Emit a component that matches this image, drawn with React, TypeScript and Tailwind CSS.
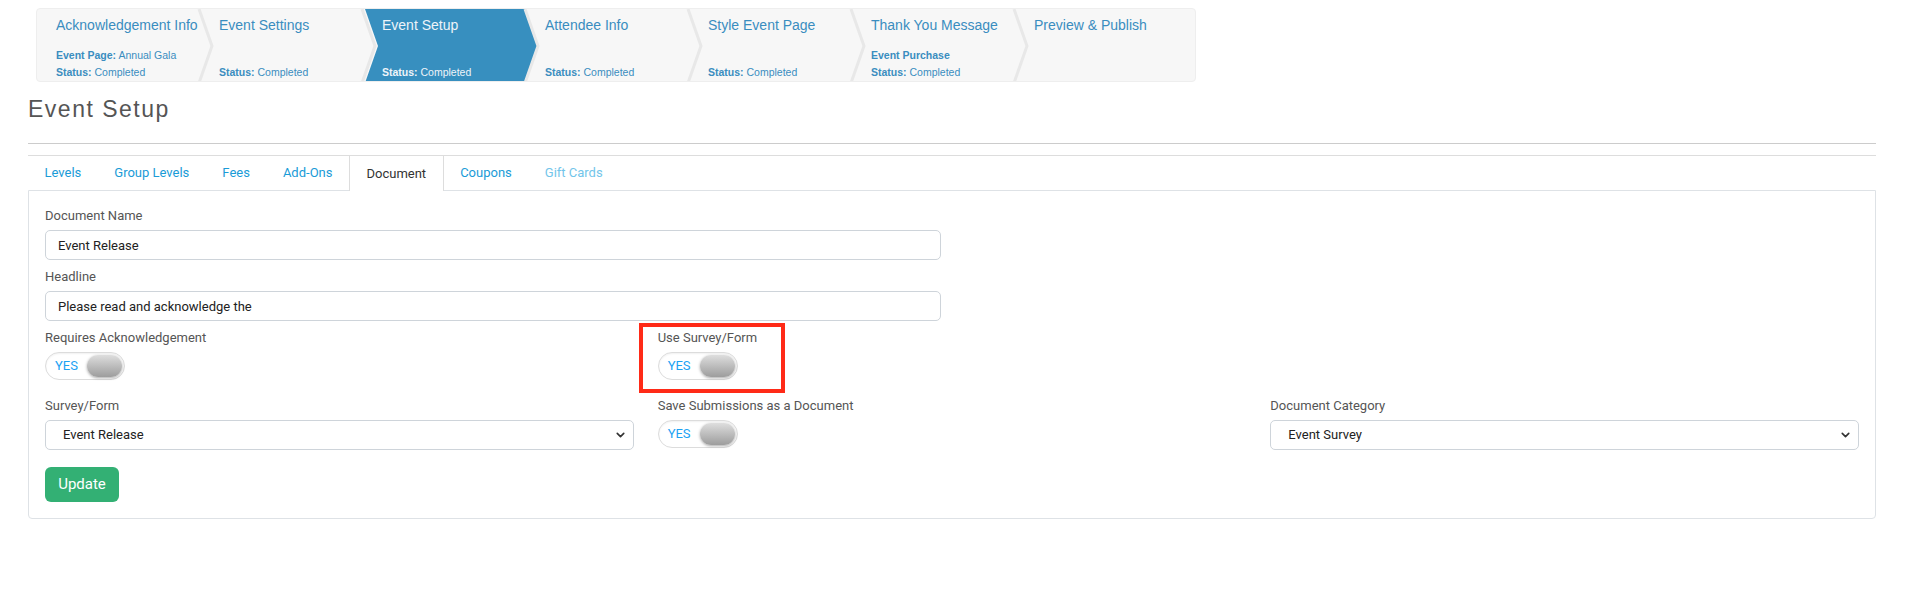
import { ChevronDown } from "lucide-react";

type Step = {
  title: string;
  lines: [string, string][];
  active?: boolean;
};

const steps: Step[] = [
  {
    title: "Acknowledgement Info",
    lines: [
      ["Event Page:", " Annual Gala"],
      ["Status:", " Completed"],
    ],
  },
  { title: "Event Settings", lines: [["Status:", " Completed"]] },
  { title: "Event Setup", lines: [["Status:", " Completed"]], active: true },
  { title: "Attendee Info", lines: [["Status:", " Completed"]] },
  { title: "Style Event Page", lines: [["Status:", " Completed"]] },
  {
    title: "Thank You Message",
    lines: [
      ["Event Purchase", ""],
      ["Status:", " Completed"],
    ],
  },
  { title: "Preview & Publish", lines: [] },
];

const tabs = ["Levels", "Group Levels", "Fees", "Add-Ons", "Document", "Coupons", "Gift Cards"];

function WizardStep({ step, last }: { step: Step; last: boolean }) {
  return (
    <div className={`relative h-full ${last ? "flex-1" : "w-[163px] shrink-0"}`}>
      {step.active && (
        <svg className="absolute left-[1px] top-0 overflow-visible" width="176" height="74" viewBox="0 0 176 74">
          <polygon points="0,0 160,0 173,37 160,74 0,74 13,37" fill="#378fbf" />
        </svg>
      )}
      {!last && (
        <svg className="absolute left-[161px] top-0 overflow-visible" width="16" height="74" viewBox="0 0 16 74">
          <polyline points="0,0 13,37 0,74" fill="none" stroke="#e8e8e8" strokeWidth="3" />
        </svg>
      )}
      <div
        className={`relative z-10 flex h-full flex-col pl-[18px] ${
          step.active ? "text-[#eef4f9]" : "text-[#3a8dbf]"
        }`}
      >
        <div className="pt-[8px] text-[14px] leading-4">{step.title}</div>
        <div className="mt-auto text-[10.5px] leading-[17px]">
          {step.lines.map(([b, r], i) => (
            <div key={i}>
              <span className="font-bold">{b}</span>
              {r}
            </div>
          ))}
        </div>
      </div>
    </div>
  );
}

function Label({ children }: { children: React.ReactNode }) {
  return <label className="mb-[6px] block text-[13px] leading-4 text-[#555]">{children}</label>;
}

function Toggle() {
  return (
    <div className="mt-[3px] flex h-[28px] w-[80px] items-center rounded-full border border-[#dcdcdc] bg-white pr-[2px] shadow-[inset_0_1px_2px_rgba(0,0,0,0.06)]">
      <span className="pl-[9px] text-[13px] text-[#1ba2f3]">YES</span>
      <span className="ml-auto h-[22px] w-[35px] rounded-full bg-gradient-to-b from-[#dedede] to-[#9d9d9d] shadow-[0_1px_3px_rgba(0,0,0,0.35)]" />
    </div>
  );
}

function Select({ value }: { value: string }) {
  return (
    <div className="relative">
      <select
        defaultValue={value}
        className="h-[30px] w-full appearance-none rounded-[5px] border border-[#ced4da] bg-white pl-[17px] text-[13px] text-[#222] outline-none"
      >
        <option>{value}</option>
      </select>
      <ChevronDown
        size={13}
        strokeWidth={3}
        className="pointer-events-none absolute right-[7px] top-1/2 -translate-y-1/2 text-[#333]"
      />
    </div>
  );
}

export default function App() {
  return (
    <div className="min-h-[593px] bg-white pl-[28px] pr-[30px] pt-[8px] font-['Roboto',sans-serif]">
      <div className="ml-[8px] flex h-[74px] w-[1160px] overflow-hidden rounded-[4px] border border-[#eeeeee] bg-[#f7f7f7] pl-[1px] font-['Liberation_Sans',Arial,sans-serif]">
        {steps.map((s, i) => (
          <WizardStep key={s.title} step={s} last={i === steps.length - 1} />
        ))}
      </div>

      <h1 className="mt-[14px] h-[26px] font-['Liberation_Sans',Arial,sans-serif] text-[23px] leading-[26px] tracking-[1.5px] text-[#555]">
        Event Setup
      </h1>

      <div className="mt-[21px] border-t border-[#cccccc]" />

      <div className="mt-[11px] flex border-t border-[#dddddd]">
        {tabs.map((t) => {
          const active = t === "Document";
          return (
            <div
              key={t}
              className={`flex h-[34px] items-center px-[16.5px] text-[13px] ${
                active
                  ? "relative z-10 -mb-px h-[35px] border-x border-[#dddddd] bg-white text-[#333]"
                  : t === "Gift Cards"
                  ? "text-[#72c5ea]"
                  : "text-[#1a9bd7]"
              }`}
            >
              {t}
            </div>
          );
        })}
      </div>

      <div className="rounded-b-[4px] border border-[#dee2e6] px-[16px] pb-[16px] pt-[17px]">
        <div className="w-[896px]">
          <Label>Document Name</Label>
          <input
            defaultValue="Event Release"
            className="mb-[9px] h-[30px] w-full rounded-[5px] border border-[#ced4da] px-[12px] text-[13px] text-[#222] outline-none"
          />
          <Label>Headline</Label>
          <input
            defaultValue="Please read and acknowledge the"
            className="mb-[9px] h-[30px] w-full rounded-[5px] border border-[#ced4da] px-[12px] text-[13px] text-[#222] outline-none"
          />
        </div>

        <div className="grid grid-cols-3 gap-x-[24px]">
          <div className="mb-[18px]">
            <Label>Requires Acknowledgement</Label>
            <Toggle />
          </div>
          <div className="relative mb-[18px]">
            <div className="absolute left-[-19px] top-[-7px] h-[70px] w-[146px] border-[4px] border-[#ff2a17]" />
            <Label>Use Survey/Form</Label>
            <Toggle />
          </div>
          <div />

          <div>
            <Label>Survey/Form</Label>
            <Select value="Event Release" />
          </div>
          <div>
            <Label>Save Submissions as a Document</Label>
            <Toggle />
          </div>
          <div>
            <Label>Document Category</Label>
            <Select value="Event Survey" />
          </div>
        </div>

        <button className="mt-[17px] h-[35px] w-[74px] rounded-[6px] bg-[#33b074] text-[15px] text-white">
          Update
        </button>
      </div>
    </div>
  );
}
